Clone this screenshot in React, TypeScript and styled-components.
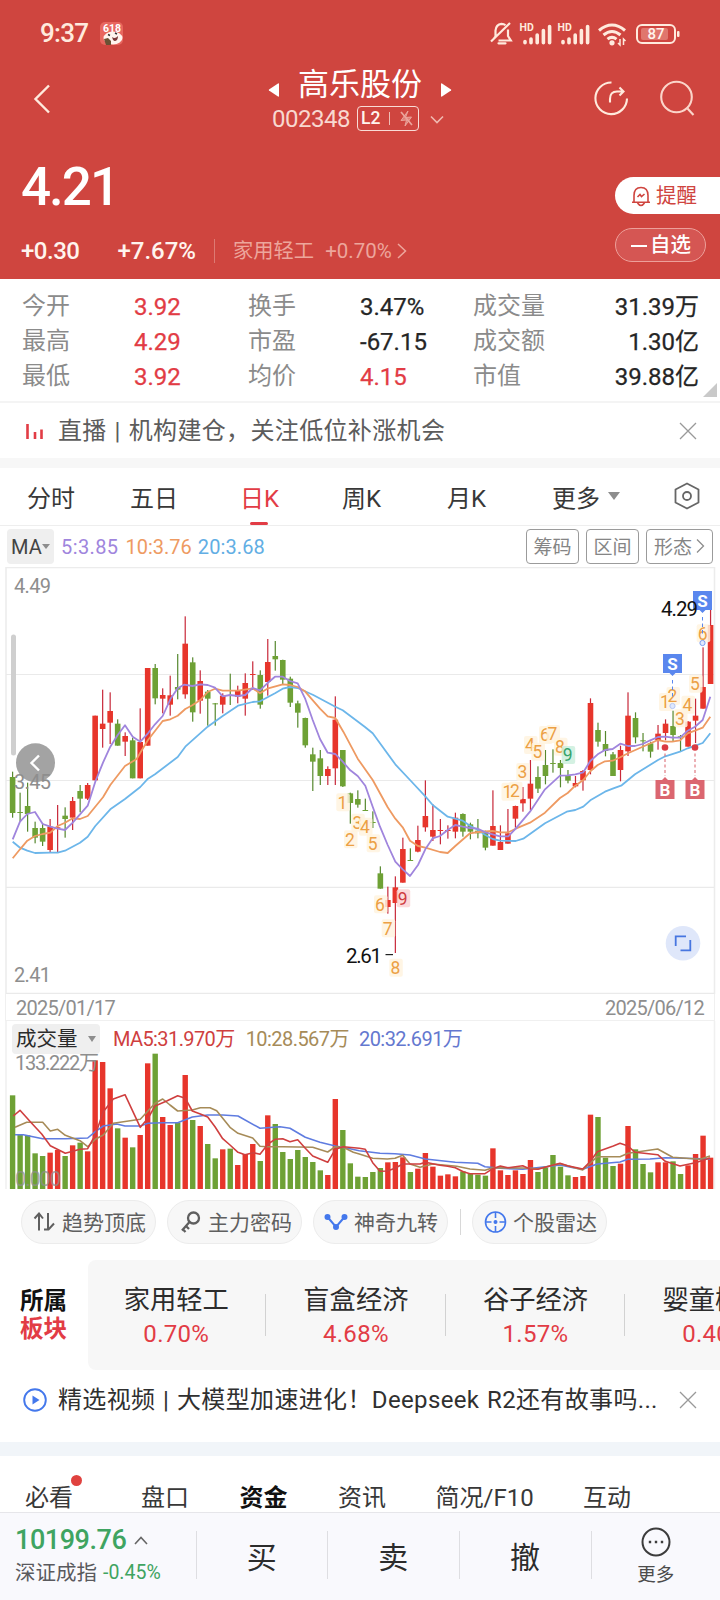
import React from "react";
import styled, { createGlobalStyle } from "styled-components";

const Global = createGlobalStyle`
  * { box-sizing: border-box; }
  body {
    margin: 0;
    background: #fff;
    font-family: Roboto, "Noto Sans CJK SC", sans-serif;
    color: #303030;
    -webkit-font-smoothing: antialiased;
  }
  svg { display: block; flex: none; }
`;

const RED = "#e23c45";
const UP = "#e7352b";
const DOWN = "#6ea135";

const Screen = styled.div`
  width: 720px;
  height: 1600px;
  overflow: hidden;
  display: flex;
  flex-direction: column;
  background: #fff;
  white-space: nowrap;
`;

const Text = styled.span<{ $size: number; $color?: string; $weight?: number; $track?: number; $ml?: number; $word?: number }>`
  font-size: ${(p) => p.$size}px;
  line-height: 1.2;
  color: ${(p) => p.$color ?? "inherit"};
  font-weight: ${(p) => p.$weight ?? 400};
  letter-spacing: ${(p) => p.$track ?? 0}px;
  word-spacing: ${(p) => p.$word ?? 0}px;
  margin-left: ${(p) => p.$ml ?? 0}px;
`;

/* ---------- header ---------- */

const Header = styled.header`
  height: 279px;
  flex: none;
  background: #cf453f;
  color: #fff4ee;
  display: flex;
  flex-direction: column;
`;

const StatusBar = styled.div`
  height: 68px;
  padding: 0 40px 0 40px;
  display: flex;
  align-items: center;
  gap: 12px;
  color: #ffeadd;
`;

const StatusIcons = styled.div`
  margin-left: auto;
  display: flex;
  align-items: center;
`;

const Spacer = styled.i<{ $w: number }>`
  width: ${(p) => p.$w}px;
`;

const NavBar = styled.div`
  height: 67px;
  display: grid;
  grid-template-columns: 268px 184px 268px;
`;

const BackSlot = styled.div`
  padding: 16px 0 0 33px;
`;

const TitleBlock = styled.div`
  display: flex;
  flex-direction: column;
  align-items: stretch;
`;

const TitleRow = styled.div`
  height: 34px;
  display: flex;
  align-items: center;
  justify-content: space-between;
  svg { margin-top: 9px; }
`;

const CodeRow = styled.div`
  height: 34px;
  padding: 1px 0 0 4px;
  display: flex;
  align-items: center;
`;

const LevelBadge = styled.div`
  width: 62px;
  height: 25px;
  margin: -2px 11px 0 7px;
  border: 1.5px solid #f9dcd6;
  border-radius: 4px;
  display: flex;
  align-items: center;
  justify-content: space-between;
  padding: 0 4px 0 3px;
`;

const BadgeRule = styled.i`
  width: 1.5px;
  height: 13px;
  background: #eebdb5;
`;

const NavActions = styled.div`
  padding: 12px 25px 0 0;
  display: flex;
  justify-content: flex-end;
  gap: 30px;
`;

const PriceArea = styled.div`
  flex: 1;
  display: flex;
  justify-content: space-between;
`;

const PriceColumn = styled.div`
  padding: 21px 0 0 21px;
  display: flex;
  flex-direction: column;
`;

const BigPrice = styled.div`
  height: 62px;
  line-height: 62px;
  font-size: 53px;
  font-weight: 500;
  letter-spacing: -2px;
  color: #fff;
`;

const ChangeRow = styled.div`
  margin-top: 18px;
  height: 30px;
  display: flex;
  align-items: center;
`;

const ChangeRule = styled.i`
  width: 1px;
  height: 24px;
  background: #dd7a73;
  margin: 0 18px 0 18px;
`;

const HeaderButtons = styled.div`
  width: 105px;
  padding-top: 42px;
  display: flex;
  flex-direction: column;
  gap: 14px;
`;

const AlertButton = styled.div`
  height: 37px;
  border-radius: 19px 0 0 19px;
  background: #fff;
  color: #cf453f;
  display: flex;
  align-items: center;
  gap: 5px;
  padding: 1px 0 0 16px;
`;

const WatchButton = styled.div`
  width: 91px;
  height: 34px;
  border: 1px solid #eda09a;
  border-radius: 17px;
  background: #d55653;
  color: #fff;
  display: flex;
  align-items: center;
  gap: 3px;
  padding: 1px 0 0 15px;
`;

const Dash = styled.i`
  width: 16px;
  height: 2px;
  background: #fff;
`;

/* ---------- quote figures ---------- */

const Stats = styled.section`
  height: 122px;
  flex: none;
  padding: 10px 21px 0 22px;
  display: grid;
  grid-template-columns: 112px 114px 112px 113px 1fr 90px;
  grid-auto-rows: 35px;
  align-items: center;
  position: relative;
`;

const Figure = styled.span<{ $red?: boolean; $end?: boolean }>`
  font-size: 24px;
  line-height: 34px;
  -webkit-text-stroke: 0.25px currentColor;
  color: ${(p) => (p.$red ? RED : "#262626")};
  justify-self: ${(p) => (p.$end ? "end" : "start")};
`;

const Corner = styled.i`
  position: absolute;
  right: 3px;
  bottom: 4px;
  border-style: solid;
  border-width: 0 0 14px 14px;
  border-color: transparent transparent #c9c9c9 transparent;
`;

const Notice = styled.section<{ $h: number; $top?: boolean }>`
  height: ${(p) => p.$h}px;
  flex: none;
  border-top: ${(p) => (p.$top ? "2px solid #f4f4f4" : "0")};
  display: flex;
  align-items: center;
  padding: 1px 23px 0 23px;
`;

const NoticeIcon = styled.div`
  width: 35px;
`;

const CloseSlot = styled.div`
  margin-left: auto;
`;

const Band = styled.div<{ $h: number; $color: string }>`
  height: ${(p) => p.$h}px;
  flex: none;
  background: ${(p) => p.$color};
`;

/* ---------- period tabs ---------- */

const PeriodTabs = styled.nav`
  height: 58px;
  flex: none;
  border-bottom: 1px solid #eee;
  padding-left: 27px;
  display: grid;
  grid-template-columns: 103px 110px 102px 105px 105px 121px 30px;
  align-items: stretch;
`;

const Tab = styled.div<{ $active?: boolean }>`
  display: flex;
  align-items: center;
  padding-bottom: 1px;
  font-size: 24px;
  color: ${(p) => (p.$active ? RED : "#383838")};
  gap: 8px;
  position: relative;
  &::after {
    content: "";
    display: ${(p) => (p.$active ? "block" : "none")};
    position: absolute;
    left: 10px;
    bottom: 0;
    width: 18px;
    height: 3px;
    border-radius: 2px;
    background: ${RED};
  }
`;

const Triangle = styled.i<{ $s: number }>`
  border-style: solid;
  border-width: ${(p) => p.$s * 1.35}px ${(p) => p.$s}px 0;
  border-color: #8d8d8d transparent transparent;
`;

const ChartTools = styled.div`
  height: 41px;
  flex: none;
  padding: 0 7px;
  display: flex;
  align-items: center;
`;

const Selector = styled.div<{ $w: number; $h: number }>`
  width: ${(p) => p.$w}px;
  height: ${(p) => p.$h}px;
  background: #efefef;
  border-radius: 4px;
  display: flex;
  align-items: center;
  justify-content: space-between;
  padding: 0 4px;
  color: #444;
`;

const ToolButtons = styled.div`
  margin-left: auto;
  display: flex;
  gap: 7px;
`;

const ToolButton = styled.div<{ $w: number }>`
  width: ${(p) => p.$w}px;
  height: 35px;
  border: 1px solid #9b9b9b;
  border-radius: 4px;
  display: flex;
  align-items: center;
  justify-content: center;
  gap: 4px;
  padding-bottom: 2px;
  font-size: 19px;
  color: #858585;
`;

/* ---------- charts ---------- */

const DateRow = styled.div`
  height: 27px;
  flex: none;
  margin: 0 5px;
  padding: 1px 10px 0;
  display: flex;
  align-items: center;
  justify-content: space-between;
  border: 1px solid #f0f0f0;
  border-top: 0;
`;

const VolumePanel = styled.div`
  height: 169px;
  flex: none;
  position: relative;
`;

const VolumeLegend = styled.div`
  position: absolute;
  left: 12px;
  top: 3px;
  height: 30px;
  display: flex;
  align-items: center;
`;

type Candle = [string, number, number, number, number];
const candles: Candle[] = [
  ["g",635,651,759,773],["g",698,756,759,785],["g",668,738,762,815],["g",785,804,833,850],["g",790,804,845,858],
  ["r",777,800,870,876],["r",735,802,805,878],["g",742,767,777,833],["r",711,723,773,810],["g",675,693,716,757],
  ["r",669,675,716,720],["r",467,467,661,661],["r",389,491,507,563],["r",397,453,488,552],["g",478,491,557,557],
  ["r",517,528,545,588],["g",533,541,655,655],["r",445,546,655,655],["r",324,324,557,557],["g",312,324,415,433],
  ["r",385,405,416,460],["r",347,406,434,467],["g",282,381,389,418],["r",169,251,403,416],["g",292,307,457,485],
  ["r",331,363,422,461],["g",390,395,416,497],["g",429,430,433,497],["r",400,407,434,460],["g",341,405,408,435],
  ["r",377,392,410,430],["r",340,369,416,467],["r",304,342,345,390],["g",331,345,434,446],["r",237,306,366,407],
  ["g",243,288,298,332],["g",299,300,359,375],["g",350,356,428,441],["g",422,430,458,503],["g",473,474,556,563],
  ["g",563,583,605,693],["g",570,595,648,675],["r",619,627,648,675],["r",409,479,625,675],["g",570,570,679,681],
  ["g",698,700,729,791],["g",691,717,734,743],["g",716,750,753,753],["g",754,786,789,804],["g",919,940,986,986],
  ["r",980,1020,1041,1061],["r",949,982,1029,1179],["r",833,867,968,968],["g",865,900,903,903],["r",797,840,875,877],
  ["r",661,768,802,815],["r",733,810,830,843],["r",777,810,813,853],["r",796,810,813,836],["r",758,773,815,835],
  ["g",760,762,815,830],["g",788,793,815,838],["g",777,812,820,835],["g",812,817,863,871],["r",691,798,857,857],
  ["r",796,846,870,870],["r",747,820,851,851],["r",737,738,776,803],["r",681,717,730,755],["r",600,671,716,751],
  ["g",619,651,686,699],["g",570,615,648,673],["g",568,609,612,638],["g",600,609,624,682],["g",630,647,662,670],
  ["r",648,669,679,682],["r",630,633,661,692],["r",415,429,630,643],["g",488,510,545,560],["g",513,552,573,589],
  ["g",576,583,648,648],["r",557,570,630,664],["r",397,467,574,588],["g",457,474,532,550],["g",519,541,544,574],
  ["g",545,550,575,593],["r",495,521,541,569],["r",478,491,519,541],["g",452,498,525,545],["g",525,529,532,575],
  ["r",483,485,560,560],["r",416,467,482,549],["r",262,381,446,446],["r",145,195,372,372],
];

const volumeTops = [
  316,434,436,490,498,488,480,498,466,458,484,211,216,295,415,443,472,435,220,191,381,405,398,255,390,408,462,505,
  478,476,525,492,462,513,376,402,486,507,480,501,516,541,555,327,420,520,560,561,546,534,517,516,502,546,536,489,
  530,557,553,559,544,550,554,557,475,541,555,541,552,510,546,533,495,530,556,561,558,374,381,503,528,521,408,478,
  522,547,517,517,514,552,526,492,437,503,
];

const U = 1 / 3;
const barX = (i: number) => 12.6 + i * 7.505;

const joined = (...parts: [number, string][]) =>
  parts
    .flatMap(([dx, s]) => s.split(" ").map((p) => p.split(",").map(Number)).map(([x, y]) => `${((x + dx) * U).toFixed(1)},${(y * U).toFixed(1)}`))
    .join(" ");

const ma5 = joined(
  [0, "38,838 60,785 82,762 105,756 128,792 151,800 173,806 195,810 218,788 240,763 263,737 286,665 309,608 331,560 353,525 375,496 398,530 421,545 444,520 465,493 488,468 511,418 533,385 552,374 577,378 601,373 623,375 645,383 668,409 690,405 714,408"],
  [720, "16,405 38,384 60,391 82,370 105,350 128,350 150,363 173,370 195,415 218,480 240,537 263,578 286,582 308,605 331,631 353,648 376,677 398,740 420,800 443,855 466,905 488,928 510,948 534,915 556,868 578,835 600,828 623,810 646,795 668,800 690,804 714,806"],
  [1440, "16,817 38,823 60,829 85,829 107,806 150,755 195,688 240,647 263,646 286,643 310,637 331,603 353,583 375,570 398,567 421,551 444,558 465,558 488,552 511,541 534,531 556,530 577,533 600,533 623,512 645,500 668,480 691,410"],
);
const ma10 = joined(
  [0, "38,895 60,868 82,842 105,828 128,822 151,818 173,798 195,788 218,775 240,777 263,768 309,712 331,675 375,618 410,597 421,578 444,540 488,483 511,478 533,467 556,447 577,436 601,420 623,396 645,386 668,392 714,392"],
  [720, "38,385 60,400 82,386 128,373 150,375 173,381 195,394 240,446 263,469 286,474 310,515 353,596 398,660 443,742 466,776 488,802 510,842 534,858 556,863 600,876 623,879 646,858 690,820 714,816"],
  [1440, "38,813 60,817 85,817 107,806 150,788 195,758 240,714 263,699 286,677 310,660 331,634 353,615 375,604 398,602 421,592 444,580 488,560 534,540 556,545 577,545 600,541 623,520 645,512 668,503 691,470"],
);
const ma20 = joined(
  [0, "38,845 60,863 82,872 105,879 151,878 173,878 195,872 240,848 263,830 286,798 331,748 375,717 421,681 444,656 465,643 533,591 556,560 623,500 668,468 714,437"],
  [720, "38,426 60,424 105,400 128,386 150,381 173,384 220,405 286,440 308,451 350,482 375,501 398,520 420,550 466,613 510,660 556,709 578,735 623,770 668,782 690,797 714,810"],
  [1440, "16,825 38,837 60,842 107,843 130,836 195,790 260,755 286,750 310,740 331,721 375,695 398,686 425,676 465,643 534,600 556,589 600,575 623,565 668,549 691,520"],
);
const vol5 = joined(
  [0, "40,378 60,361 95,400 125,432 151,467 196,490 240,478 263,476 286,435 310,365 340,327 375,314 421,412 444,385 465,348 500,333 533,317 556,325 577,363 601,372 623,381 645,410 668,446 690,465 714,487 735,494 760,488 780,493 804,462 825,448 848,446 870,455 893,449 916,475 938,498 983,517 1006,478 1030,470 1078,475"],
  [1080, "16,478 38,518 60,544 82,543 105,535 128,522 180,522 196,517 240,526 263,529 286,533 310,545 330,551 375,551 398,536 421,528 444,533 488,527 510,537 534,538 577,526 600,520 623,527 668,537 690,515 712,485 760,468 780,460 804,468 825,487 893,494 916,514 960,528 1006,518 1050,504"],
);
const vol10 = joined(
  [0, "45,412 80,397 128,397 151,423 173,418 196,436 240,452 263,470 286,448 310,435 340,400 421,388 465,340 488,327 510,345 533,363 577,360 601,353 630,353 650,362 690,412 714,430 758,444 780,469 800,470 848,470 938,472 983,486 1006,470 1030,472 1060,487 1078,492"],
  [1080, "38,505 82,507 105,505 128,496 150,522 180,532 218,522 290,529 330,537 375,541 398,533 488,534 534,536 600,521 668,540 712,500 780,500 804,490 893,477 938,502 1020,508 1050,498"],
);
const vol20 = joined(
  [0, "45,434 70,434 128,446 196,446 263,444 286,425 310,408 350,402 375,408 421,408 444,400 488,398 533,398 577,381 623,375 668,375 714,378 780,415 840,410 870,415 916,442 960,457 1006,468 1050,476 1078,482"],
  [1080, "60,490 105,491 150,495 196,507 286,517 353,520 375,530 421,535 488,538 577,528 600,525 640,533 668,538 712,522 780,516 804,508 870,507 916,503 1050,507"],
);

// nine-turn counters: label, centre x, centre y, tone
const counters: [string, number, number, string?][] = [
  ["1",342.3,242.3],["2",350,279.3],["3",357.3,262.7],["4",365,266.7],["5",372.7,283.3],["6",380,344.3],["7",387.7,368.3],["8",395.3,407.7],["9",402.7,338.3,"red"],
  ["1",507.5,231.7],["2",515,230.7],["3",522.3,212],["4",530,185],["5",537.5,191.7],["6",545,175],["7",552.5,174],["8",560,186.7],["9",567.7,195,"green"],
  ["1",665,142],["2",672.5,136],["3",680,158.3],["4",687.5,144.7],["5",695,123.7],["6",702.7,73.3],
];
const tones: Record<string, [string, string]> = {
  amber: ["#eca044", "#fff3df"],
  red: ["#cf3a3f", "#fbd3d5"],
  green: ["#34a36c", "#cdeedd"],
};

const MaLine = styled.polyline<{ $c: string; $w?: number }>`
  fill: none;
  stroke: ${(p) => p.$c};
  stroke-width: ${(p) => p.$w ?? 1.8};
  stroke-linejoin: round;
`;

const AxisLabel = styled.text`
  font-size: 20px;
  fill: #8e8e8e;
`;

const Candles = () => (
  <>
    {candles.map(([c, h, t, b, l], i) => {
      const col = c === "r" ? UP : DOWN;
      const x = barX(i);
      return (
        <g key={i}>
          <rect x={x - 0.6} y={h * U} width={1.2} height={(l - h) * U} fill={c === "r" ? "#c8293a" : "#56882e"} />
          <rect x={x - 2.8} y={t * U} width={5.6} height={Math.max(1, (b - t) * U)} fill={col} />
        </g>
      );
    })}
  </>
);

const PriceChart = () => (
  <svg width="720" height="427" viewBox="0 7 720 427">
    <path d="M6 434V7.5H714.5V434" fill="none" stroke="#ececec" strokeWidth="1.5" />
    {[114.5, 220.5, 327.3, 433.3].map((y) => (
      <path key={y} d={`M6 ${y}H714`} stroke="#eaeaea" strokeWidth="1.2" />
    ))}
    <AxisLabel x="14" y="33" textLength="37">4.49</AxisLabel>
    <AxisLabel x="14" y="422" textLength="37">2.41</AxisLabel>
    <rect x="11" y="74.5" width="5" height="121" rx="2.5" fill="#cfcfcf" />
    <Candles />
    <circle cx="35.5" cy="202.7" r="19.5" fill="#a3a3a3" />
    <path d="M39 195.5L31.5 203L39 210.5" fill="none" stroke="#fff" strokeWidth="2.4" />
    <AxisLabel x="14" y="229" textLength="37">3.45</AxisLabel>
    {counters.map(([n, x, y, tone], i) => {
      const [fg, bg] = tones[tone ?? "amber"];
      return (
        <g key={i}>
          <rect x={x - 6} y={y - 9} width="13.5" height="18" rx="2" fill={bg} fillOpacity="0.85" />
          <text x={x} y={y + 6.2} fontSize="17.5" textAnchor="middle" fill={fg}>{n}</text>
        </g>
      );
    })}
    <MaLine points={ma20} $c="#6cb6ea" />
    <MaLine points={ma10} $c="#ee9a62" />
    <MaLine points={ma5} $c="#a085dd" />
    <path d="M385.5 394.6H393" stroke="#222" strokeWidth="1.2" />
    <text x="346" y="402.5" fontSize="20.5" fill="#111" textLength="36">2.61</text>
    {[[672.5, 94], [702.5, 31]].map(([x, y]) => (
      <g key={x}>
        <path d={`M${x - 9.5} ${y}h19v19h-6.5l-3 3l-3-3h-6.5z`} fill="#5a87ee" />
        <text x={x} y={y + 15.5} fontSize="17" fontWeight="700" fill="#fff" textAnchor="middle">S</text>
        <path d={`M${x} ${y + 26}V${y + 44}`} stroke="#5a87ee" strokeDasharray="3.5 3" />
      </g>
    ))}
    <circle cx="702.5" cy="83" r="2.6" fill="#dfe8fc" stroke="#7b9df0" />
    <circle cx="672.5" cy="146" r="2.6" fill="#dfe8fc" stroke="#b4c6f5" />
    <text x="661" y="55.5" fontSize="20.5" fill="#111" textLength="37">4.29</text>
    {[665, 695].map((x) => (
      <g key={x}>
        <circle cx={x} cy="187.5" r="3.3" fill="#da3a42" />
        <path d={`M${x} 193.5V216`} stroke="#d9606a" strokeDasharray="3 2.5" />
        <path d={`M${x - 9.5} 220h6.5l3-3l3 3h6.5v19h-19z`} fill="#db6670" />
        <text x={x} y="236" fontSize="17" fontWeight="700" fill="#fff" textAnchor="middle">B</text>
      </g>
    ))}
    <circle cx="683" cy="383.3" r="17.3" fill="#dfe7fa" />
    <path d="M675.7 386V376.3H686M680.5 390.3H690.3V380" fill="none" stroke="#4776e0" strokeWidth="1.8" />
  </svg>
);

const VolumeChart = () => (
  <svg width="720" height="169" viewBox="0 31 720 169">
    <path d="M6 31V199M714.5 31V199" stroke="#f0f0f0" strokeWidth="1.5" />
    {volumeTops.map((t, i) => (
      <rect key={i} x={barX(i) - 2.7} y={t * U} width="5.4" height={(597 - t) * U} fill={candles[i][0] === "r" ? UP : DOWN} />
    ))}
    <AxisLabel x="15" y="79.5" textLength="84">133.222万</AxisLabel>
    <AxisLabel x="15" y="195.5" textLength="46" opacity="0.75">0.000</AxisLabel>
    <MaLine points={vol20} $c="#5f7ce0" $w={1.6} />
    <MaLine points={vol10} $c="#a68b58" $w={1.6} />
    <MaLine points={vol5} $c="#cf3f3f" $w={1.6} />
  </svg>
);

/* ---------- shortcuts and sectors ---------- */

const Pills = styled.div`
  height: 70px;
  flex: none;
  padding: 10px 0 0 21px;
  display: flex;
  gap: 11px;
`;

const Pill = styled.div`
  width: 135px;
  height: 44px;
  border-radius: 22px;
  border: 1.5px solid #ececec;
  background: #f7f7f7;
  display: flex;
  align-items: center;
  justify-content: space-between;
  padding: 0 9px 2px 10px;
  font-size: 21px;
  color: #5f5f5f;
  svg { margin-top: 2px; }
`;

const PillRule = styled.i`
  width: 1px;
  height: 26px;
  margin: 9px 0 0 1px;
  background: #d8d8d8;
`;

const Sectors = styled.section`
  height: 110px;
  flex: none;
  display: flex;
`;

const SectorTitle = styled.div`
  width: 88px;
  padding: 28px 0 0 20px;
  display: flex;
  flex-direction: column;
  font-size: 23.5px;
  line-height: 27.5px;
  font-weight: 700;
  color: #111;
`;

const RedPart = styled.span`
  color: ${RED};
`;

const SectorList = styled.div`
  flex: 1;
  background: #f7f7f7;
  border-radius: 8px 0 0 8px;
  display: flex;
  overflow: hidden;
`;

const Sector = styled.div`
  flex: none;
  width: 179.6px;
  padding-top: 21px;
  display: flex;
  flex-direction: column;
  align-items: center;
  position: relative;
  font-size: 26.3px;
  line-height: 38px;
  color: #2c2c2c;
  &:first-child { margin-left: -1.5px; }
  &::after {
    content: "";
    position: absolute;
    right: 0;
    top: 34px;
    width: 1px;
    height: 42px;
    background: #d2d2d2;
  }
`;

const SectorRate = styled.span`
  font-size: 24px;
  line-height: 30px;
  letter-spacing: 0.3px;
  color: ${RED};
`;

const InfoTabs = styled.nav`
  height: 56px;
  flex: none;
  padding: 12px 0 0 25px;
  display: grid;
  grid-template-columns: 116px 98.5px 98.5px 97.5px 147.5px 60px;
  font-size: 24px;
  line-height: 60px;
  color: #383838;
`;

const InfoTab = styled.div<{ $active?: boolean }>`
  position: relative;
  height: 44px;
  font-weight: ${(p) => (p.$active ? 700 : 400)};
  color: ${(p) => (p.$active ? "#111" : "inherit")};
`;

const UnreadDot = styled.i`
  position: absolute;
  left: 46px;
  top: 7px;
  width: 11px;
  height: 11px;
  border-radius: 50%;
  background: #e0423f;
`;

const TradeBar = styled.footer`
  flex: 1;
  position: relative;
  border-top: 1.5px solid #e6e6ea;
  background: #f9f9fd;
  display: grid;
  grid-template-columns: 195.5px 131.5px 131.5px 132px 1fr;
`;

const IndexCell = styled.div`
  padding: 9px 0 0 15px;
  display: flex;
  flex-direction: column;
`;

const Inline = styled.div<{ $gap: number; $h: number }>`
  display: flex;
  align-items: center;
  gap: ${(p) => p.$gap}px;
  height: ${(p) => p.$h}px;
`;

const TradeCell = styled.div`
  margin: 18px 0 0;
  height: 48px;
  border-left: 1px solid #dedee2;
  display: flex;
  align-items: center;
  justify-content: center;
  padding-bottom: 1px;
  font-size: 30px;
  color: #2c2c2c;
`;

const MoreCell = styled(TradeCell)`
  flex-direction: column;
  justify-content: flex-start;
  padding: 0;
  font-size: 18.5px;
  line-height: 28px;
  gap: 4px;
  color: #4c4c4c;
  svg { margin-top: -4px; }
`;

const CloseIcon = () => (
  <svg width="18" height="18" viewBox="0 0 18 18" stroke="#999" strokeWidth="1.3">
    <path d="M1 1L17 17M17 1L1 17" />
  </svg>
);

const SignalIcon = () => (
  <svg width="38" height="24" viewBox="0 0 38 24">
    <text x="4.5" y="9" fontSize="10.5" fontWeight="700" fill="#ffeadd">HD</text>
    <path d="M10 20.8v-1.2M16 20.8V17M22.2 20.8V13M28.400 20.8V8.500M34.600 20.8V4.500" stroke="#ffeadd" strokeWidth="3.6" strokeLinecap="round" />
  </svg>
);

const stats: [string, string, boolean][][] = [
  [["今开", "3.92", true], ["换手", "3.47%", false], ["成交量", "31.39万", false]],
  [["最高", "4.29", true], ["市盈", "-67.15", false], ["成交额", "1.30亿", false]],
  [["最低", "3.92", true], ["均价", "4.15", true], ["市值", "39.88亿", false]],
];

const sectors = [["家用轻工", "0.70%"], ["盲盒经济", "4.68%"], ["谷子经济", "1.57%"], ["婴童概念", "0.40%"]];

export default function App() {
  return (
    <Screen>
      <Global />
      <Header>
        <StatusBar>
          <Text $size={26} $weight={500} $track={-0.7}>9:37</Text>
          <svg width="24" height="24" viewBox="0 0 24 24">
            <rect x="0" y="0" width="23" height="23" rx="5" fill="#e8675f" />
            <text x="12" y="9.5" fontSize="10.5" fontWeight="700" textAnchor="middle" fill="#fff">618</text>
            <ellipse cx="13" cy="16" rx="9.5" ry="6.5" fill="#fff4ee" />
            <path d="M12 15q3 2.500 6-1q0 5-3.500 5q-2-1-2.500-4z" fill="#7a3a3a" />
            <path d="M8 12.5l2 1M15 11l2 1" stroke="#333" strokeWidth="1.4" />
            <path d="M4 17l4-1 3 3v4H6z" fill="#6b5134" />
          </svg>
          <StatusIcons>
            <svg width="23" height="26" viewBox="0 0 23 26" fill="none" stroke="#ffeadd" strokeWidth="2.2">
              <path d="M4 17.5L5.5 15.5V9.5Q6 3.5 11.5 2.8Q14 2.8 15.5 4.2M18 8.5V15L20.8 19.500H8.5M1 20.5L20 2" />
              <path d="M8.500 22.3h7" strokeLinecap="round" />
            </svg>
            <Spacer $w={2} />
            <SignalIcon />
            <SignalIcon />
            <Spacer $w={5} />
            <svg width="32" height="25" viewBox="0 0 32 25" fill="none" stroke="#ffeadd" strokeWidth="3">
              <path d="M3 8.5Q16-2.5 29 8.5M7.5 13Q16 6 24.5 13M11.5 17.2Q16 13.5 20.5 17.2" />
              <circle cx="16" cy="20.8" r="2.6" fill="#ffeadd" stroke="none" />
              <path d="M24 17v6l-2-2M27.5 23v-6l2 2" strokeWidth="1.5" />
            </svg>
            <Spacer $w={7} />
            <svg width="45" height="22" viewBox="0 0 45 22">
              <rect x="2" y="2" width="38" height="18" rx="5" fill="none" stroke="#ffeadd" strokeWidth="2" />
              <rect x="6" y="5" width="27" height="12" rx="2" fill="#e0766d" />
              <rect x="42" y="8" width="2.5" height="6" rx="1" fill="#ffeadd" />
              <text x="21" y="16.3" fontSize="15" fontWeight="500" textAnchor="middle" fill="#fff4ee">87</text>
            </svg>
          </StatusIcons>
        </StatusBar>
        <NavBar>
          <BackSlot>
            <svg width="18" height="30" viewBox="0 0 18 30" fill="none" stroke="#ffeadd" strokeWidth="2.4">
              <path d="M16 1.5L2.5 15L16 28.5" />
            </svg>
          </BackSlot>
          <TitleBlock>
            <TitleRow>
              <svg width="12" height="16" viewBox="0 0 12 16"><path d="M11 2V14Q11 15 10 14.5L1 8.5Q.5 8 1 7.5L10 1.5Q11 1 11 2Z" fill="#fff" /></svg>
              <Text $size={31} $color="#fff">高乐股份</Text>
              <svg width="12" height="16" viewBox="0 0 12 16"><path d="M1 2V14Q1 15 2 14.5L11 8.5Q11.5 8 11 7.5L2 1.5Q1 1 1 2Z" fill="#fff" /></svg>
            </TitleRow>
            <CodeRow>
              <Text $size={24} $track={-0.5} $color="#f8d8d0">002348</Text>
              <LevelBadge>
                <Text $size={17.5} $weight={500}>L2</Text>
                <BadgeRule />
                <svg width="15" height="17" viewBox="0 0 15 17" fill="none" stroke="#eba59c" strokeWidth="1.700">
                  <path d="M2 2L13 15" />
                  <path d="M9 1L6.500 7.500L12.500 7L6 16L7.500 10L2 10.500Z" fill="#eba59c" fillOpacity="0.6" strokeWidth="1" />
                </svg>
              </LevelBadge>
              <svg width="14" height="9" viewBox="0 0 14 9" fill="none" stroke="#f0b9b0" strokeWidth="1.6">
                <path d="M1 1.5L7 7.5L13 1.5" />
              </svg>
            </CodeRow>
          </TitleBlock>
          <NavActions>
            <svg width="36" height="37" viewBox="0 0 36 37" fill="none" stroke="#ffeadd" strokeWidth="2.1">
              <path d="M18.500 2.500A15.800 15.800 0 1 0 34 18.500" />
              <path d="M17 22.500V19Q17 11.5 24 11.5H30M26.500 7.500L30.5 11.5L26.500 15.500" />
            </svg>
            <svg width="36" height="37" viewBox="0 0 36 37" fill="none" stroke="#fbd5ca" strokeWidth="2.1">
              <circle cx="17.500" cy="17" r="15.3" />
              <path d="M28.500 28.500L34.500 35" />
            </svg>
          </NavActions>
        </NavBar>
        <PriceArea>
          <PriceColumn>
            <BigPrice>4.21</BigPrice>
            <ChangeRow>
              <Text $size={24} $weight={500} $track={-0.5}>+0.30</Text>
              <Text $size={24} $weight={500} $ml={38}>+7.67%</Text>
              <ChangeRule />
              <Text $size={20.3} $color="#eda69c">家用轻工</Text>
              <Text $size={20.5} $color="#eda69c" $ml={11}>+0.70%</Text>
              <Spacer $w={5} />
              <svg width="10" height="16" viewBox="0 0 10 16" fill="none" stroke="#eda69c" strokeWidth="1.5">
                <path d="M1 1L8.5 8L1 15" />
              </svg>
            </ChangeRow>
          </PriceColumn>
          <HeaderButtons>
            <AlertButton>
              <svg width="20" height="21" viewBox="0 0 20 21" fill="none" stroke="#cf453f" strokeWidth="1.6">
                <path d="M1 16.2H19M3 16V9.5Q3 1.5 10 1.5T17 9.5V16M6.5 17Q10 22 13.5 17M6.5 11L9 8.5L10.5 10.5L13.5 8" />
              </svg>
              <Text $size={20.5}>提醒</Text>
            </AlertButton>
            <WatchButton>
              <Dash />
              <Text $size={20.5} $weight={500}>自选</Text>
            </WatchButton>
          </HeaderButtons>
        </PriceArea>
      </Header>

      <Stats>
        {stats.flatMap((row) =>
          row.flatMap(([label, value, red], c) => [
            <Text key={label} $size={24} $color="#8b8b8b">{label}</Text>,
            <Figure key={label + value} $red={red} $end={c === 2}>{value}</Figure>,
          ]),
        )}
        <Corner />
      </Stats>

      <Notice $h={57} $top>
        <NoticeIcon>
          <svg width="20" height="18" viewBox="0 0 20 18" stroke={RED} strokeWidth="2.6">
            <path d="M4.5 2V17M12 10V17M18.5 7.5V17" />
          </svg>
        </NoticeIcon>
        <Text $size={24} $color="#5c5c5c" $track={0.35} $word={1.6}>直播 | 机构建仓，关注低位补涨机会</Text>
        <CloseSlot><CloseIcon /></CloseSlot>
      </Notice>
      <Band $h={10} $color="#f7f7f7" />

      <PeriodTabs>
        <Tab>分时</Tab>
        <Tab>五日</Tab>
        <Tab $active>日K</Tab>
        <Tab>周K</Tab>
        <Tab>月K</Tab>
        <Tab>更多<Triangle $s={6.5} /></Tab>
        <Tab>
          <svg width="28" height="28" viewBox="0 0 28 28" fill="none" stroke="#666" strokeWidth="1.8">
            <path d="M14 1.5L25.5 7.5V20.5L14 26.5L2.5 20.5V7.5Z" strokeLinejoin="round" />
            <circle cx="14" cy="14" r="4" />
          </svg>
        </Tab>
      </PeriodTabs>
      <ChartTools>
        <Selector $w={47} $h={35}>
          <Text $size={20}>MA</Text>
          <Triangle $s={4.2} />
        </Selector>
        <Text $size={20} $color="#a085dd" $track={0.4} $ml={7}>5:3.85</Text>
        <Text $size={20} $color="#ee9a62" $track={0} $ml={7}>10:3.76</Text>
        <Text $size={20} $color="#62aee4" $track={0.1} $ml={6}>20:3.68</Text>
        <ToolButtons>
          <ToolButton $w={53}>筹码</ToolButton>
          <ToolButton $w={53}>区间</ToolButton>
          <ToolButton $w={67}>
            形态
            <svg width="9" height="16" viewBox="0 0 9 16" fill="none" stroke="#8d8d8d" strokeWidth="1.3"><path d="M1 1.5L7.5 8L1 14.5" /></svg>
          </ToolButton>
        </ToolButtons>
      </ChartTools>

      <PriceChart />
      <DateRow>
        <Text $size={20} $color="#8e8e8e" $track={-0.75}>2025/01/17</Text>
        <Text $size={20} $color="#8e8e8e" $track={-0.75}>2025/06/12</Text>
      </DateRow>
      <VolumePanel>
        <VolumeChart />
        <VolumeLegend>
          <Selector $w={88} $h={30}>
            <Text $size={20.5} $color="#2b2b2b">成交量</Text>
            <Triangle $s={4.5} />
          </Selector>
          <Text $size={20} $color="#cf3f3f" $track={-0.6} $ml={13}>MA5:31.970万</Text>
          <Text $size={20} $color="#a68b58" $track={-0.55} $ml={11}>10:28.567万</Text>
          <Text $size={20} $color="#6478cf" $track={-0.55} $ml={10}>20:32.691万</Text>
        </VolumeLegend>
      </VolumePanel>

      <Pills>
        <Pill>
          <svg width="24" height="20" viewBox="0 0 24 20" fill="none" stroke="#5f5f5f" strokeWidth="2">
            <path d="M7 18.500V2M2.500 6.500L7 1.5L11 6.500M16 1V17.500M12 17.500H16.500L22 11.500" />
          </svg>
          趋势顶底
        </Pill>
        <Pill>
          <svg width="24" height="22" viewBox="0 0 24 22" fill="none" stroke="#5f5f5f" strokeWidth="2.300">
            <circle cx="15.5" cy="7" r="5.5" />
            <path d="M11.5 11L4 19.500M8 15L11 18M4.5 18L7.500 21" />
          </svg>
          主力密码
        </Pill>
        <Pill>
          <svg width="24" height="18" viewBox="0 0 24 18" fill="#4478ec" stroke="#4478ec" strokeWidth="2">
            <path d="M3.5 4L12 14L20.5 4" fill="none" />
            <circle cx="3.5" cy="4" r="2" /><circle cx="12" cy="14" r="2" /><circle cx="20.5" cy="4" r="2" />
          </svg>
          神奇九转
        </Pill>
        <PillRule />
        <Pill>
          <svg width="24" height="24" viewBox="0 0 24 24" fill="none" stroke="#4478ec" strokeWidth="1.6">
            <circle cx="12.5" cy="12" r="10" />
            <path d="M12.5 2V8M12.5 16V22M2.5 12H8.5M16.5 12H22.5" />
            <circle cx="12.5" cy="12" r="1.2" fill="#4478ec" />
          </svg>
          个股雷达
        </Pill>
      </Pills>

      <Sectors>
        <SectorTitle>
          <span>所属</span>
          <RedPart>板块</RedPart>
        </SectorTitle>
        <SectorList>
          {sectors.map(([name, rate]) => (
            <Sector key={name}>
              {name}
              <SectorRate>{rate}</SectorRate>
            </Sector>
          ))}
        </SectorList>
      </Sectors>

      <Notice $h={59}>
        <NoticeIcon>
          <svg width="24" height="24" viewBox="0 0 24 24" fill="none" stroke="#4478ec" strokeWidth="1.9">
            <circle cx="12" cy="12" r="10.8" />
            <path d="M9.5 7.5V16.5L16.5 12Z" fill="#4478ec" stroke="none" />
          </svg>
        </NoticeIcon>
        <Text $size={24} $color="#303030" $track={0.35} $word={1.4}>精选视频 | 大模型加速进化！Deepseek R2还有故事吗...</Text>
        <CloseSlot><CloseIcon /></CloseSlot>
      </Notice>
      <Band $h={13} $color="#fff" />
      <Band $h={14} $color="#f1f5f9" />

      <InfoTabs>
        <InfoTab>必看<UnreadDot /></InfoTab>
        <InfoTab>盘口</InfoTab>
        <InfoTab $active>资金</InfoTab>
        <InfoTab>资讯</InfoTab>
        <InfoTab>简况/F10</InfoTab>
        <InfoTab>互动</InfoTab>
      </InfoTabs>

      <TradeBar>
        <IndexCell>
          <Inline $gap={8} $h={36}>
            <Text $size={27} $color="#3fa461" $weight={500} $track={-0.45}>10199.76</Text>
            <svg width="14" height="9" viewBox="0 0 14 9" fill="none" stroke="#666" strokeWidth="1.6"><path d="M1 8L7 1.5L13 8" /></svg>
          </Inline>
          <Inline $gap={6} $h={30}>
            <Text $size={20.5} $color="#5a5a5e">深证成指</Text>
            <Text $size={19.5} $color="#3fa461">-0.45%</Text>
          </Inline>
        </IndexCell>
        <TradeCell>买</TradeCell>
        <TradeCell>卖</TradeCell>
        <TradeCell>撤</TradeCell>
        <MoreCell>
          <svg width="30" height="30" viewBox="0 0 30 30" fill="none" stroke="#3c3c3c" strokeWidth="2">
            <circle cx="15" cy="15" r="13.5" />
            <path d="M7.8 15h2.400M13.8 15h2.400M19.8 15h2.400" strokeWidth="2.4" />
          </svg>
          更多
        </MoreCell>
      </TradeBar>
    </Screen>
  );
}
